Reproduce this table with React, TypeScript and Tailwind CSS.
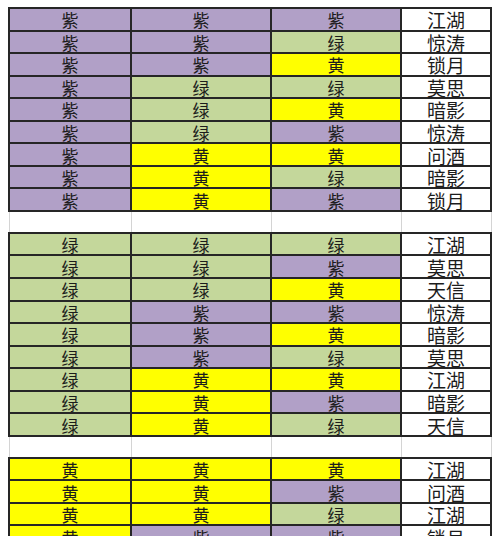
const COLORS: Record<string, string> = {
  紫: 'bg-[#b1a0c7]',
  绿: 'bg-[#c4d79b]',
  黄: 'bg-[#ffff00]',
};

type Row = [string, string, string, string];

const blocks: Row[][] = [
  [
    ['紫', '紫', '紫', '江湖'],
    ['紫', '紫', '绿', '惊涛'],
    ['紫', '紫', '黄', '锁月'],
    ['紫', '绿', '绿', '莫思'],
    ['紫', '绿', '黄', '暗影'],
    ['紫', '绿', '紫', '惊涛'],
    ['紫', '黄', '黄', '问酒'],
    ['紫', '黄', '绿', '暗影'],
    ['紫', '黄', '紫', '锁月'],
  ],
  [
    ['绿', '绿', '绿', '江湖'],
    ['绿', '绿', '紫', '莫思'],
    ['绿', '绿', '黄', '天信'],
    ['绿', '紫', '紫', '惊涛'],
    ['绿', '紫', '黄', '暗影'],
    ['绿', '紫', '绿', '莫思'],
    ['绿', '黄', '黄', '江湖'],
    ['绿', '黄', '紫', '暗影'],
    ['绿', '黄', '绿', '天信'],
  ],
  [
    ['黄', '黄', '黄', '江湖'],
    ['黄', '黄', '紫', '问酒'],
    ['黄', '黄', '绿', '江湖'],
    ['黄', '紫', '紫', '锁月'],
  ],
];

const cols = 'grid grid-cols-[122px_140px_130px_90px]';

function Block({ rows }: { rows: Row[] }) {
  return (
    <div className="border-t-2 border-l-2 border-[#262626] w-[484px]">
      {rows.map((row, i) => (
        <div key={i} className={cols}>
          {row.slice(0, 3).map((c, j) => (
            <div
              key={j}
              className={`h-[22.55px] border-r-2 border-b-2 border-[#262626] ${COLORS[c]} flex items-center justify-center pt-[1px] text-[17px] leading-none text-[#1c1c1c]`}
            >
              {c}
            </div>
          ))}
          <div className="h-[22.55px] border-r-2 border-b-2 border-[#262626] bg-white flex items-center justify-center pt-[1px] text-[19px] leading-none text-[#1c1c1c]">
            {row[3]}
          </div>
        </div>
      ))}
    </div>
  );
}

function Gap() {
  return (
    <div className={`${cols} h-[20px] border-l border-[#d4d4d4] ml-[1px] w-[483px]`}>
      <div className="border-r border-[#d4d4d4]" />
      <div className="border-r border-[#d4d4d4]" />
      <div className="border-r border-[#d4d4d4]" />
      <div className="border-r border-[#d4d4d4]" />
    </div>
  );
}

export default function App() {
  return (
    <div
      className="w-[500px] h-[536px] overflow-hidden bg-white pt-[7px] pl-[8px]"
      style={{ fontFamily: '"Noto Sans CJK SC", "Noto Sans", sans-serif' }}
    >
      <Block rows={blocks[0]} />
      <Gap />
      <Block rows={blocks[1]} />
      <Gap />
      <Block rows={blocks[2]} />
    </div>
  );
}
